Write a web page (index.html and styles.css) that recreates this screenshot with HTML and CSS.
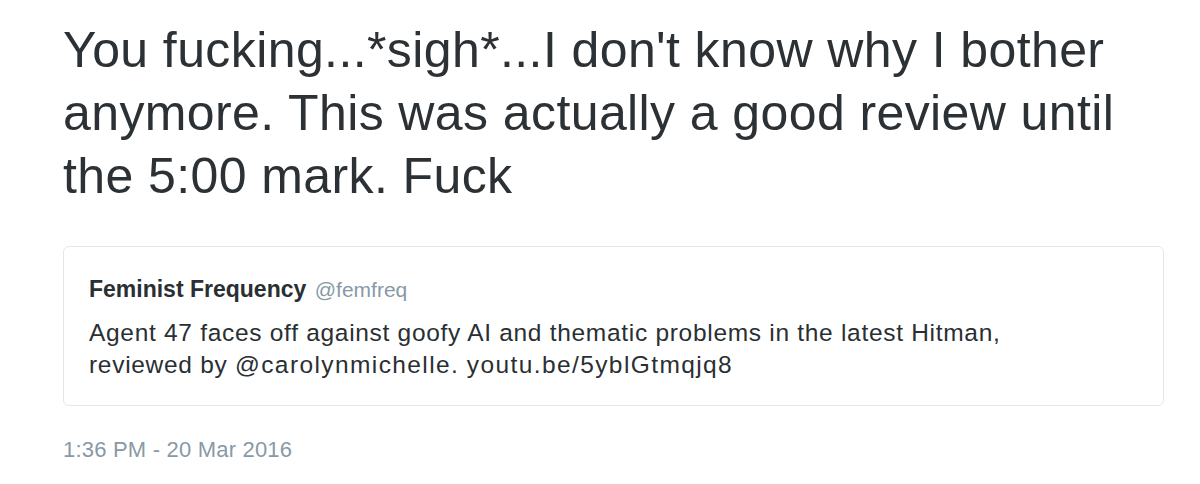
FILE: index.html
```html
<!DOCTYPE html>
<html lang="en">
<head>
<meta charset="utf-8">
<title>Tweet</title>
<link rel="stylesheet" href="styles.css">
</head>
<body>
<main class="tweet">
  <p class="tweet-text">You fucking...*sigh*...I don't know why I bother anymore. This was actually a good review until the 5:00 mark. Fuck</p>
  <div class="quote">
    <div class="quote-header">
      <span class="quote-name">Feminist Frequency</span>
      <span class="quote-handle">@femfreq</span>
    </div>
    <p class="quote-text">Agent 47 faces off against goofy AI and thematic problems in the latest Hitman, reviewed by <span class="entity">@carolynmichelle.</span> <span class="entity">youtu.be/5yblGtmqjq8</span></p>
  </div>
  <div class="timestamp">1:36 PM - 20 Mar 2016</div>
</main>
</body>
</html>
```
FILE: styles.css
```css
html, body {
  margin: 0;
  padding: 0;
  background: #ffffff;
}

body {
  font-family: "Liberation Sans", Arial, Helvetica, sans-serif;
  color: #292f33;
}

.tweet {
  padding: 19px 36px 0 63px;
  display: flex;
  flex-direction: column;
}

.tweet-text {
  margin: 0;
  font-size: 50px;
  line-height: 63px;
  letter-spacing: 0.4px;
  color: #2b3135;
}

.quote {
  margin-top: 38px;
  border: 1px solid #e1e8ed;
  border-radius: 6px;
  padding: 26px 70px 24px 25px;
}

.quote-header {
  line-height: 32px;
  margin-bottom: 9px;
  white-space: nowrap;
}

.quote-name {
  font-weight: 700;
  font-size: 23px;
  color: #292f33;
}

.quote-handle {
  font-size: 21px;
  color: #8899a6;
  margin-left: 4px;
}

.quote-text {
  margin: 0;
  font-size: 24.5px;
  line-height: 32px;
  letter-spacing: 0.7px;
  color: #292f33;
}

.entity {
  letter-spacing: 1.4px;
}

.timestamp {
  margin-top: 30px;
  font-size: 22px;
  line-height: 28px;
  letter-spacing: 0.2px;
  color: #8899a6;
}
```
